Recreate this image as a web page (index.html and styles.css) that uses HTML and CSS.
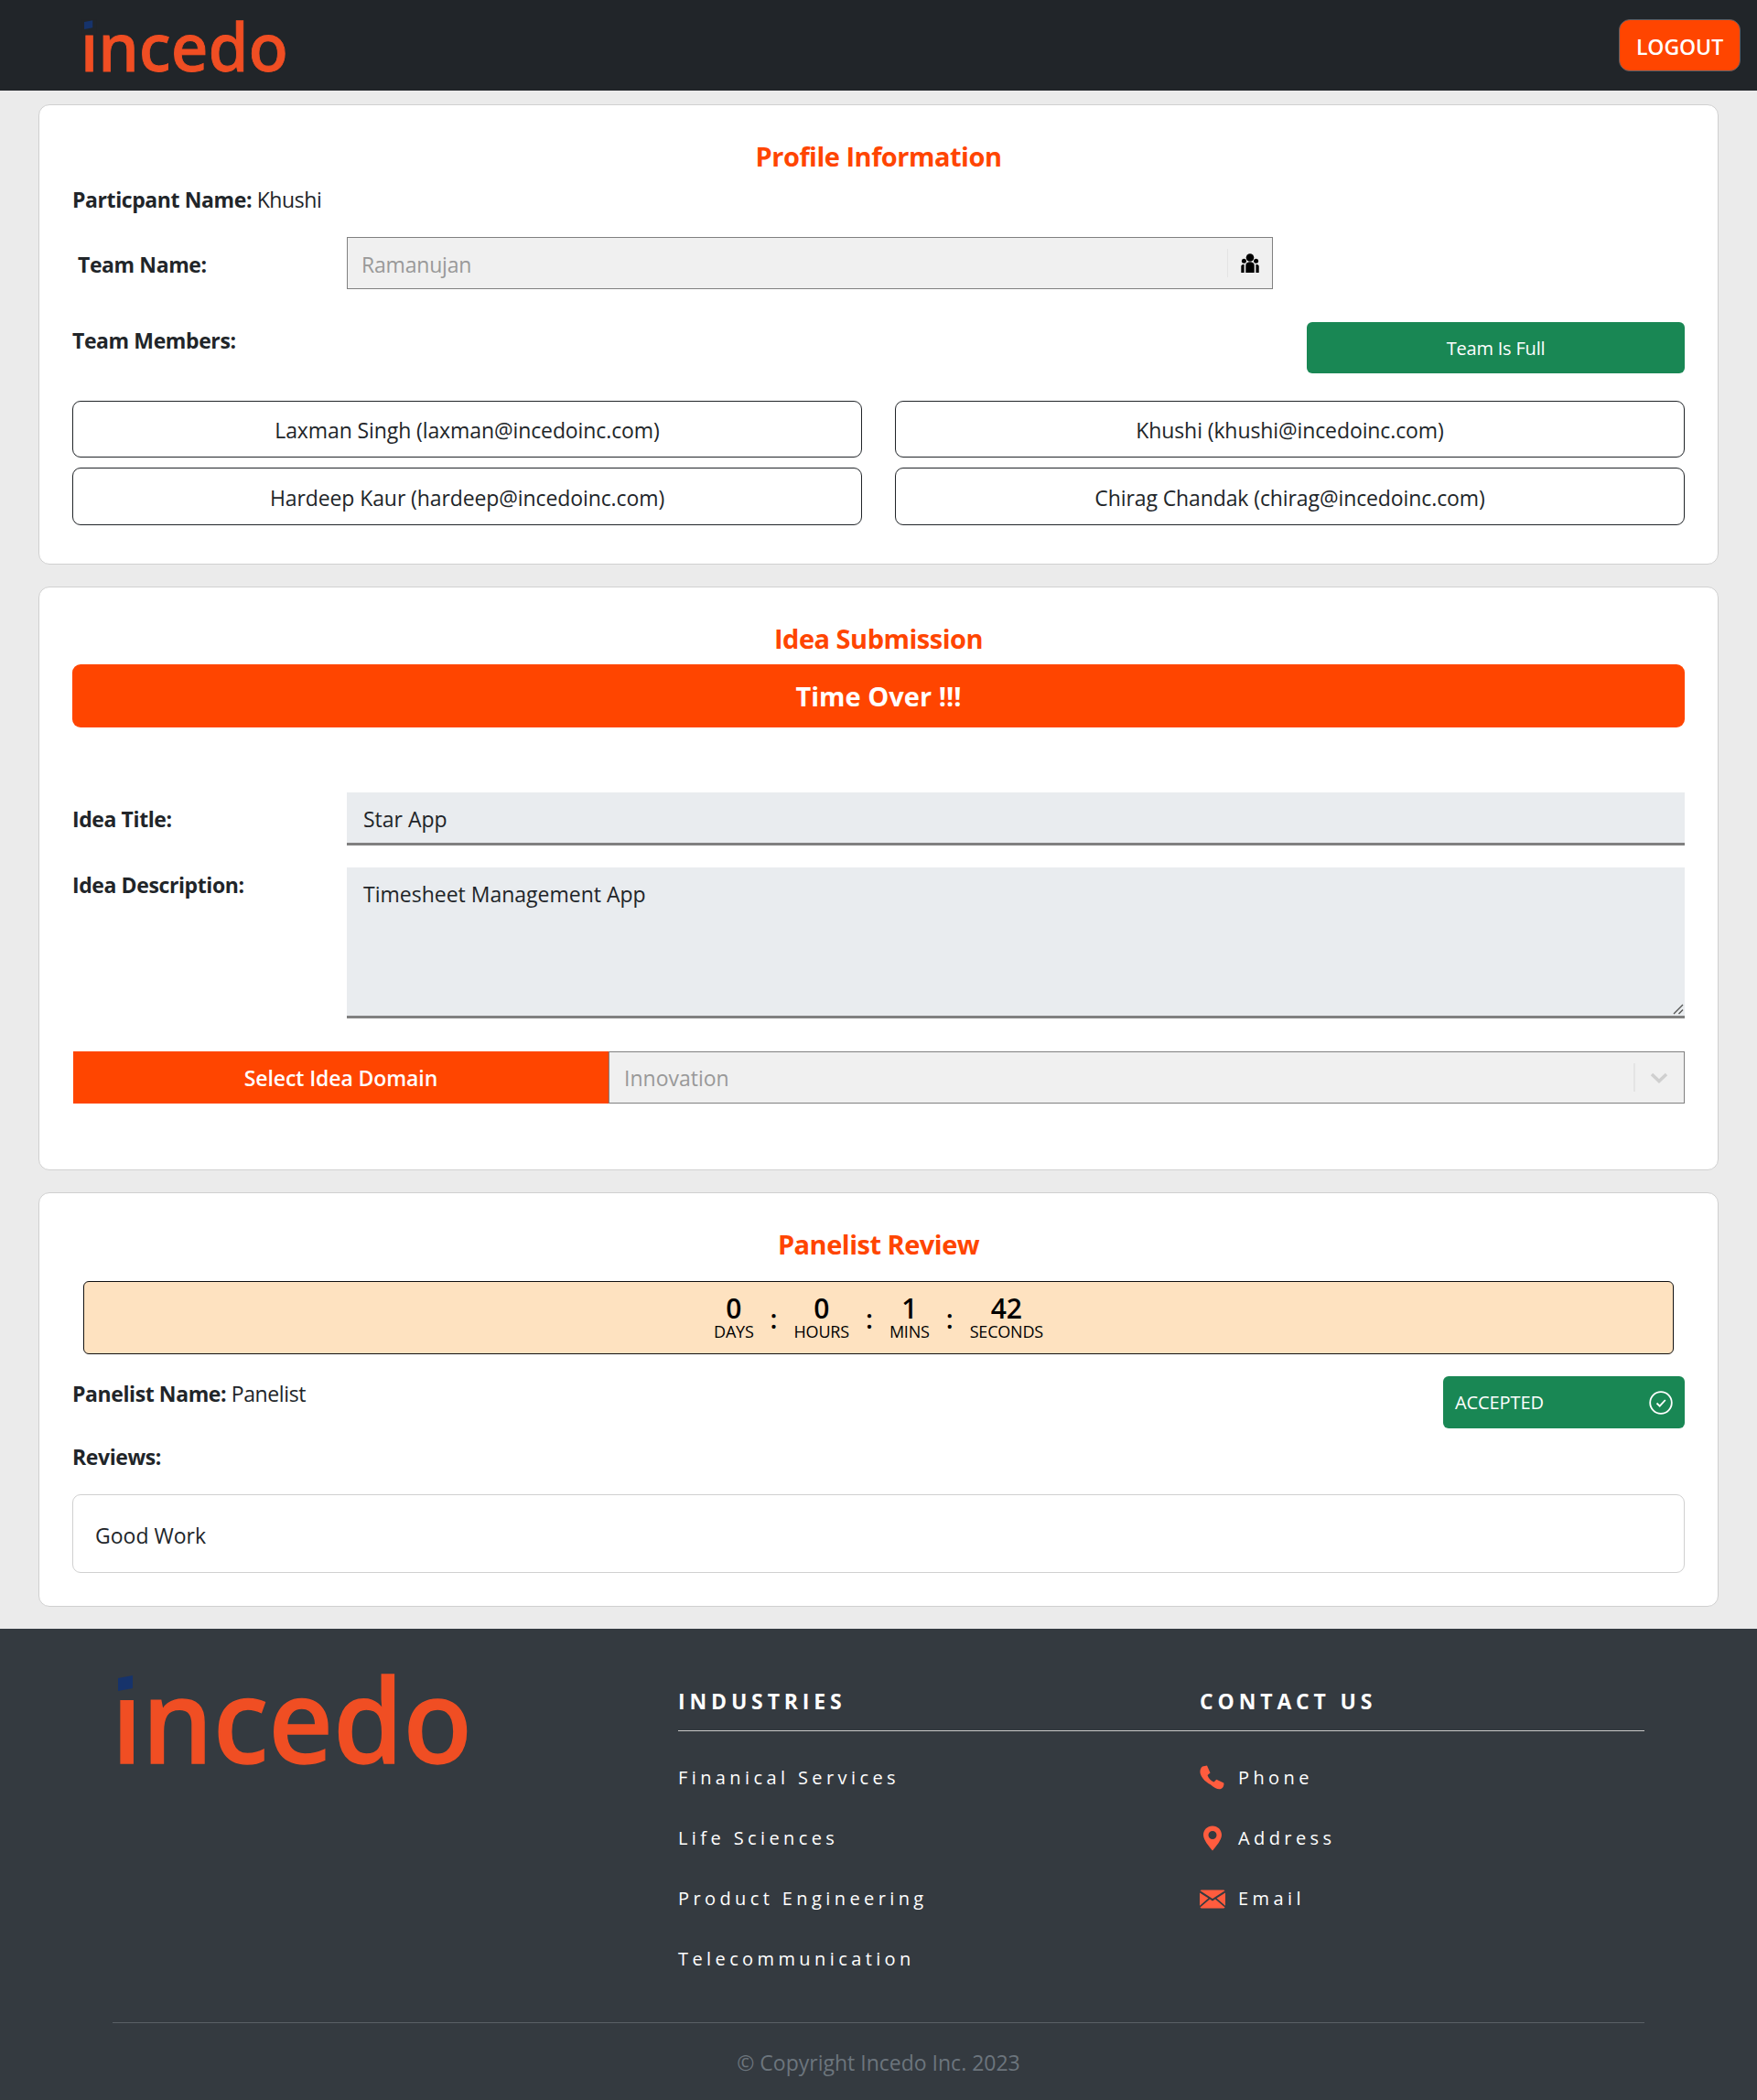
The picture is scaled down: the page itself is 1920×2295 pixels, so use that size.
FILE: index.html
```html
<!DOCTYPE html>
<html lang="en">
<head>
<meta charset="utf-8">
<title>Incedo Hackathon</title>
<link rel="stylesheet" href="styles.css">
</head>
<body>
<header class="topbar">
  <svg class="logo logo-small" viewBox="0 0 394 110" role="img" aria-label="incedo">
    <text class="logo-text" x="0" y="98" textLength="394" lengthAdjust="spacingAndGlyphs">incedo</text>
    <rect class="logo-dot-cover" x="2" y="0" width="28" height="29"/>
    <path class="logo-dot" d="M7 5 L23 2 V16 L7 19 Z"/>
  </svg>
  <button class="logout">LOGOUT</button>
</header>
<main class="page">
  <section class="card card-profile">
    <h2 class="card-title">Profile Information</h2>
    <p class="line"><b>Particpant Name:</b> Khushi</p>
    <div class="team-row">
      <b class="team-label">Team Name:</b>
      <div class="select select-team">
        <span class="select-value">Ramanujan</span>
        <span class="select-sep"></span>
        <svg class="team-icon" viewBox="0 0 20 21"><circle cx="10" cy="4.500" r="4.300"/><circle cx="3.400" cy="8.300" r="2.500"/><circle cx="16.600" cy="8.300" r="2.500"/><path d="M5.300 21v-8c0-2.600 2-3.800 4.700-3.800s4.700 1.200 4.700 3.800v8z"/><path d="M.3 21v-7c0-1 .8-2 2.300-2h1v9zM19.700 21v-7c0-1-.8-2-2.300-2h-1v9z"/></svg>
      </div>
    </div>
    <div class="members-head">
      <b>Team Members:</b>
      <div class="btn-full">Team Is Full</div>
    </div>
    <div class="members">
      <div class="member">Laxman Singh (laxman@incedoinc.com)</div>
      <div class="member">Khushi (khushi@incedoinc.com)</div>
      <div class="member">Hardeep Kaur (hardeep@incedoinc.com)</div>
      <div class="member">Chirag Chandak (chirag@incedoinc.com)</div>
    </div>
  </section>

  <section class="card card-idea">
    <h2 class="card-title">Idea Submission</h2>
    <div class="time-over">Time Over !!!</div>
    <div class="field field-title">
      <b class="field-label">Idea Title:</b>
      <div class="field-input">Star App</div>
    </div>
    <div class="field field-desc">
      <b class="field-label">Idea Description:</b>
      <div class="field-input field-area">Timesheet Management App
        <svg class="resize" viewBox="0 0 12 12"><path d="M1 11 11 1M6.500 11 11 6.500"/></svg>
      </div>
    </div>
    <div class="domain">
      <div class="domain-label">Select Idea Domain</div>
      <div class="select select-domain">
        <span class="select-value">Innovation</span>
        <span class="select-sep"></span>
        <svg class="chevron" viewBox="0 0 20 20"><path d="M2 6 10 13.500 18 6"/></svg>
      </div>
    </div>
  </section>

  <section class="card card-review">
    <h2 class="card-title">Panelist Review</h2>
    <div class="timer">
      <div class="unit"><span class="num">0</span><span class="cap">DAYS</span></div>
      <span class="colon">:</span>
      <div class="unit"><span class="num">0</span><span class="cap">HOURS</span></div>
      <span class="colon">:</span>
      <div class="unit"><span class="num">1</span><span class="cap">MINS</span></div>
      <span class="colon">:</span>
      <div class="unit"><span class="num">42</span><span class="cap">SECONDS</span></div>
    </div>
    <div class="panelist-row">
      <p class="line"><b>Panelist Name:</b> Panelist</p>
      <div class="accepted">
        <span>ACCEPTED</span>
        <svg class="check" viewBox="0 0 26 26"><circle cx="13" cy="13" r="11.800"/><path d="M8.500 13.500 11.700 16.700 17.800 10"/></svg>
      </div>
    </div>
    <p class="line reviews-label"><b>Reviews:</b></p>
    <div class="review-box">Good Work</div>
  </section>
</main>
<footer class="footer">
  <div class="footer-grid">
    <svg class="logo logo-large" viewBox="0 0 394 110" role="img" aria-label="incedo">
      <text class="logo-text" x="0" y="98" textLength="394" lengthAdjust="spacingAndGlyphs">incedo</text>
      <rect class="logo-dot-cover footer-cover" x="2" y="0" width="28" height="29"/>
      <path class="logo-dot" d="M7 5 L23 2 V16 L7 19 Z"/>
    </svg>
    <div class="footer-col">
      <h3 class="footer-head">INDUSTRIES</h3>
      <ul class="footer-list">
        <li>Finanical Services</li>
        <li>Life Sciences</li>
        <li>Product Engineering</li>
        <li>Telecommunication</li>
      </ul>
    </div>
    <div class="footer-col">
      <h3 class="footer-head">CONTACT US</h3>
      <ul class="footer-list">
        <li><svg class="ficon" viewBox="0 0 28 28"><path d="M3 1.500 8 .5l3.500 8-3 2.500c1.200 3.400 3.500 6 7 7.500l2.800-2.800 8 3.800c.6 2.500-.5 5.500-3.200 6.500-3 .9-7-.9-11-4.500C4.500 17.500 1.500 12.500.5 8.500.2 5.500 1 3 3 1.500z"/></svg>Phone</li>
        <li><svg class="ficon" viewBox="0 0 28 28"><path fill-rule="evenodd" d="M14 .5C8.300.5 4 4.900 4 10.300c0 6 6.400 12.600 10 17.200 3.600-4.600 10-11.200 10-17.200C24 4.900 19.700.5 14 .5zM14 6a4.500 4.500 0 1 1 0 9 4.500 4.500 0 0 1 0-9z"/></svg>Address</li>
        <li><svg class="ficon" viewBox="0 0 28 28"><path d="M2 4.500h24c.6 0 1.200.3 1.500.8L14 14 .5 5.300c.3-.5.900-.8 1.500-.8zM0 7.500v14.300L9.500 13.600zM28 7.500v14.300L18.500 13.600zM11 14.600l3 2 3-2 10.500 9c-.3.500-.9.900-1.500.900H2c-.6 0-1.200-.4-1.500-.9z"/></svg>Email</li>
      </ul>
    </div>
  </div>
  <div class="copyright">© Copyright Incedo Inc. 2023</div>
</footer>
</body>
</html>
```
FILE: styles.css
```css
* { box-sizing: border-box; }
html, body { margin: 0; padding: 0; }
body {
  background: #ebebeb;
  color: #212529;
  font-family: "Open Sans", "Noto Sans", sans-serif;
  font-size: 23px;
  line-height: 36px;
}
b { font-weight: 700; letter-spacing: -0.4px; }
p { margin: 0; }

.topbar {
  height: 99px;
  background: #212529;
  display: flex;
  align-items: center;
  justify-content: space-between;
  padding: 0 18px 0 88px;
}
.logo { display: block; overflow: visible; }
.logo-small { width: 227px; height: 63.5px; margin-top: 6px; }
.logo-large { width: 394px; height: 110px; margin-left: -1px; }
.logo-text {
  font-family: "Noto Sans", sans-serif;
  font-weight: 500;
  font-size: 127px;
  fill: #f04e23;
  stroke: #f04e23;
  stroke-width: 1.500px;
}
.logo-dot { fill: #16336b; }
.logo-dot-cover { fill: #212529; }
.footer-cover { fill: #343a40; }
.logout {
  width: 133px;
  height: 57px;
  background: #ff4500;
  color: #fff;
  border: 1px solid #5a6068;
  border-radius: 12px;
  font: 600 23px/1 "Open Sans", sans-serif;
  letter-spacing: -0.05px;
  padding: 4px 0 0;
}

.page { padding: 15px 42px 24px; display: flex; flex-direction: column; gap: 24px; }
.card {
  background: #fff;
  border: 1px solid #d0d0d0;
  border-radius: 12px;
  padding: 0 36px;
}
.card-profile { height: 503px; }
.card-idea { height: 638px; }
.card-review { height: 453px; }
.card-title {
  margin: 0;
  padding-top: 36px;
  text-align: center;
  color: #ff4500;
  font-size: 29px;
  font-weight: 700;
  line-height: 40px;
  letter-spacing: -0.5px;
}
.line { line-height: 36px; letter-spacing: -0.4px; }
.card-profile .line { margin-top: 9px; }

.team-row { display: flex; align-items: center; margin-top: 23px; }
.team-label { width: 300px; padding: 2px 0 0 6px; }
.select {
  display: flex;
  align-items: center;
  height: 57px;
  background: #f0f0f0;
  border: 1px solid #808080;
  color: #999;
  padding-left: 16px;
}
.select-team { width: 1012px; padding-left: 15px; }
.select-team .select-value { letter-spacing: -0.2px; padding-top: 2px; }
.select-value { flex: 1; }
.select-sep { width: 1px; height: 31px; background: #e4e4e4; }
.team-icon { width: 20px; height: 21px; margin: 0 14px; fill: #000; }

.members-head { display: flex; justify-content: space-between; align-items: flex-start; margin-top: 36px; }
.members-head b { margin-top: 2px; }
.btn-full {
  width: 413px;
  height: 56px;
  background: #198754;
  color: #fff;
  border-radius: 6px;
  font-size: 20px;
  letter-spacing: -0.2px;
  padding-top: 2px;
  display: flex;
  align-items: center;
  justify-content: center;
}
.members {
  display: grid;
  grid-template-columns: 863px 863px;
  grid-template-rows: 62px 63px;
  column-gap: 36px;
  row-gap: 11px;
  margin-top: 30px;
}
.member {
  border: 1px solid #212529;
  border-radius: 9px;
  letter-spacing: -0.1px;
  padding-top: 2px;
  display: flex;
  align-items: center;
  justify-content: center;
}

.time-over {
  margin-top: 8px;
  height: 69px;
  background: #ff4500;
  color: #fff;
  border-radius: 9px;
  font-size: 29px;
  font-weight: 700;
  display: flex;
  align-items: center;
  justify-content: center;
}
.field { display: flex; align-items: flex-start; }
.field-label { width: 300px; flex: none; }
.field-title { margin-top: 71px; }
.field-title .field-label { padding-top: 11px; }
.field-desc { margin-top: 24px; }
.field-desc .field-label { padding-top: 1px; }
.field-input {
  position: relative;
  flex: 1;
  background: #e9ecef;
  border-bottom: 3px solid #808080;
  height: 58px;
  padding: 11px 18px 0;
}
.field-area { height: 165px; }
.resize {
  position: absolute;
  right: 1px;
  bottom: 1px;
  width: 12px;
  height: 12px;
  fill: none;
  stroke: #555;
  stroke-width: 1.4;
}
.domain { display: flex; margin-top: 36px; height: 57px; padding-left: 1px; }
.domain-label {
  width: 585px;
  background: #ff4500;
  color: #fff;
  font-weight: 600;
  letter-spacing: -0.1px;
  display: flex;
  align-items: center;
  justify-content: center;
}
.select-domain { flex: 1; }
.select-domain .select-sep { width: 2px; }
.chevron {
  width: 20px;
  height: 20px;
  margin: 0 17px 0 16px;
  fill: none;
  stroke: #cfcfcf;
  stroke-width: 3.500;
}

.timer {
  margin: 20px 12px 0;
  height: 80px;
  background: #fee2c0;
  border: 1px solid #111;
  border-radius: 6px;
  display: flex;
  align-items: center;
  justify-content: center;
  color: #000;
}
.unit { display: flex; flex-direction: column; align-items: center; }
.num { font-size: 30px; font-weight: 600; line-height: 28px; margin-top: 1px; }
.cap { font-size: 18px; line-height: 22px; letter-spacing: -0.2px; }
.colon { font-size: 29px; font-weight: 600; padding: 0 18px; line-height: 1; }
.panelist-row { display: flex; justify-content: space-between; align-items: flex-start; margin-top: 24px; }
.panelist-row .line { margin-top: 1px; }
.accepted {
  width: 264px;
  height: 57px;
  background: #198754;
  color: #fff;
  border-radius: 6px;
  padding: 0 13px;
  font-size: 20px;
  letter-spacing: -0.1px;
  display: flex;
  align-items: center;
  justify-content: space-between;
}
.check { width: 26px; height: 26px; fill: none; stroke: #fff; stroke-width: 1.800; }
.reviews-label { margin-top: 13px; }
.review-box {
  margin-top: 23px;
  height: 86px;
  border: 1px solid #d0d0d0;
  border-radius: 9px;
  display: flex;
  align-items: center;
  padding: 3px 24px 0;
}

.footer { background: #343a40; height: 515px; padding: 0 123px; }
.footer-grid {
  display: grid;
  grid-template-columns: 618px 570px 486px;
  height: 431px;
  border-bottom: 1px solid #5a6066;
  padding-top: 49px;
}
.footer-head {
  margin: 12px 0 0;
  padding-bottom: 14px;
  border-bottom: 1px solid #c8c8c8;
  color: #fff;
  font-size: 23px;
  font-weight: 700;
  letter-spacing: 4.850px;
  line-height: 36px;
}
.footer-list { list-style: none; margin: 18px 0 0; padding: 0; color: #fff; font-size: 20px; letter-spacing: 4.400px; }
.footer-list li { height: 66px; display: flex; align-items: center; }
.ficon { width: 28px; height: 28px; margin-right: 14px; fill: #ff5c3e; }
.copyright { text-align: center; color: #6c757d; padding-top: 25px; }
```
